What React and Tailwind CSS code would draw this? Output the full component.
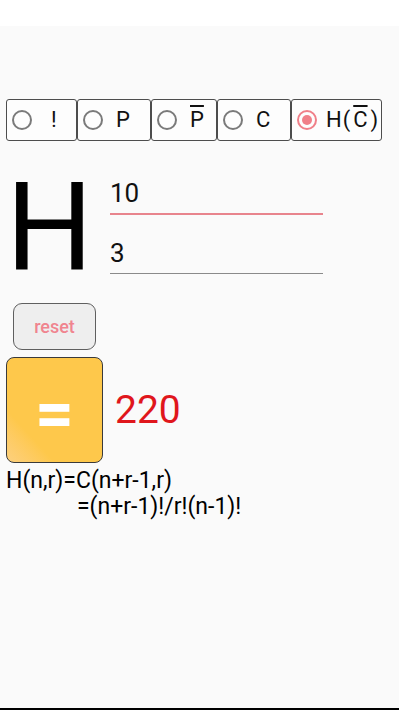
import React, { useState } from "react";

const modes = [
  { id: "fact", w: "w-[71px]", gap: "ml-[19px]", label: <span>!</span> },
  { id: "perm", w: "w-[74px]", gap: "ml-[13px]", label: <span>P</span> },
  { id: "permRep", w: "w-[66px]", gap: "ml-[13px]", label: <span className="overline decoration-[1.5px]">P</span> },
  { id: "comb", w: "w-[74px]", gap: "ml-[13px]", label: <span>C</span> },
  {
    id: "combRep",
    w: "w-[91px]",
    gap: "ml-[9px]",
    label: (
      <span className="flex items-center">
        H<span className="ml-[1px] mr-[3px]">(</span>
        <span className="overline decoration-[1.5px]">C</span>
        <span className="ml-[3px]">)</span>
      </span>
    ),
  },
];

function Radio({ checked }) {
  return (
    <span
      className={`flex items-center justify-center w-[20px] h-[20px] rounded-full border-2 shrink-0 ${
        checked ? "border-[#f07f88]" : "border-[#7a7a7a]"
      }`}
    >
      {checked && <span className="w-[10px] h-[10px] rounded-full bg-[#f07f88]" />}
    </span>
  );
}

export default function App() {
  const [mode, setMode] = useState("combRep");
  const [n, setN] = useState("10");
  const [r, setR] = useState("3");

  return (
    <div
      className="w-[399px] h-[710px] bg-white flex flex-col overflow-hidden text-[#111]"
      style={{ fontFamily: "Roboto, 'Noto Sans', sans-serif" }}
    >
      <div className="h-[26px] bg-white" />
      <div className="flex-1 bg-[#fafafa] flex flex-col pt-[73px]">
        {/* mode selector */}
        <div className="flex ml-[6px] h-[42px]">
          {modes.map((m) => (
            <button
              key={m.id}
              onClick={() => setMode(m.id)}
              className={`${m.w} h-full flex items-center pl-[5px] border border-[#4d4d4d] rounded-[3px] bg-[#fdfdfd] text-[22px] leading-none`}
            >
              <Radio checked={mode === m.id} />
              <span className={m.gap}>{m.label}</span>
            </button>
          ))}
        </div>

        {/* inputs */}
        <div className="flex items-start px-[6px] mt-[26px]">
          <span className="w-[104px] text-[122px] leading-none text-black">H</span>
          <div className="w-[213px] mt-[10px] flex flex-col">
            <input
              value={n}
              onChange={(e) => setN(e.target.value)}
              className="h-[38px] pb-[4px] text-[26px] leading-[32px] bg-transparent outline-none border-b-2 border-[#e8848d]"
            />
            <input
              value={r}
              onChange={(e) => setR(e.target.value)}
              className="h-[37px] mt-[22px] pb-[4px] text-[26px] leading-[32px] bg-transparent outline-none border-b border-[#8a8a8a]"
            />
          </div>
        </div>

        <button
          onClick={() => {
            setN("");
            setR("");
          }}
          className="ml-[13px] mt-[14px] w-[83px] h-[47px] rounded-[9px] border border-[#5f5f5f] bg-[#eeeeee] text-[18px] font-medium text-[#f0848f]"
        >
          reset
        </button>

        <div className="flex items-center mt-[7px] ml-[6px]">
          <button className="w-[97px] h-[106px] rounded-[8px] border border-[#3a3a3a] bg-linear-to-tr from-[#fdd07e] via-[#fec84b] via-25% to-[#fec84b] text-white text-[68px] font-bold leading-none pt-[8px]">
            =
          </button>
          <span className="ml-[12px] text-[39px] text-[#e0161c] leading-none">220</span>
        </div>

        <div className="ml-[6px] mt-[5px] text-[23px] leading-[26px] text-black">
          <div>H(n,r)=C(n+r-1,r)</div>
          <div className="pl-[71px]">=(n+r-1)!/r!(n-1)!</div>
        </div>
      </div>
      <div className="h-[2px] bg-black" />
    </div>
  );
}
